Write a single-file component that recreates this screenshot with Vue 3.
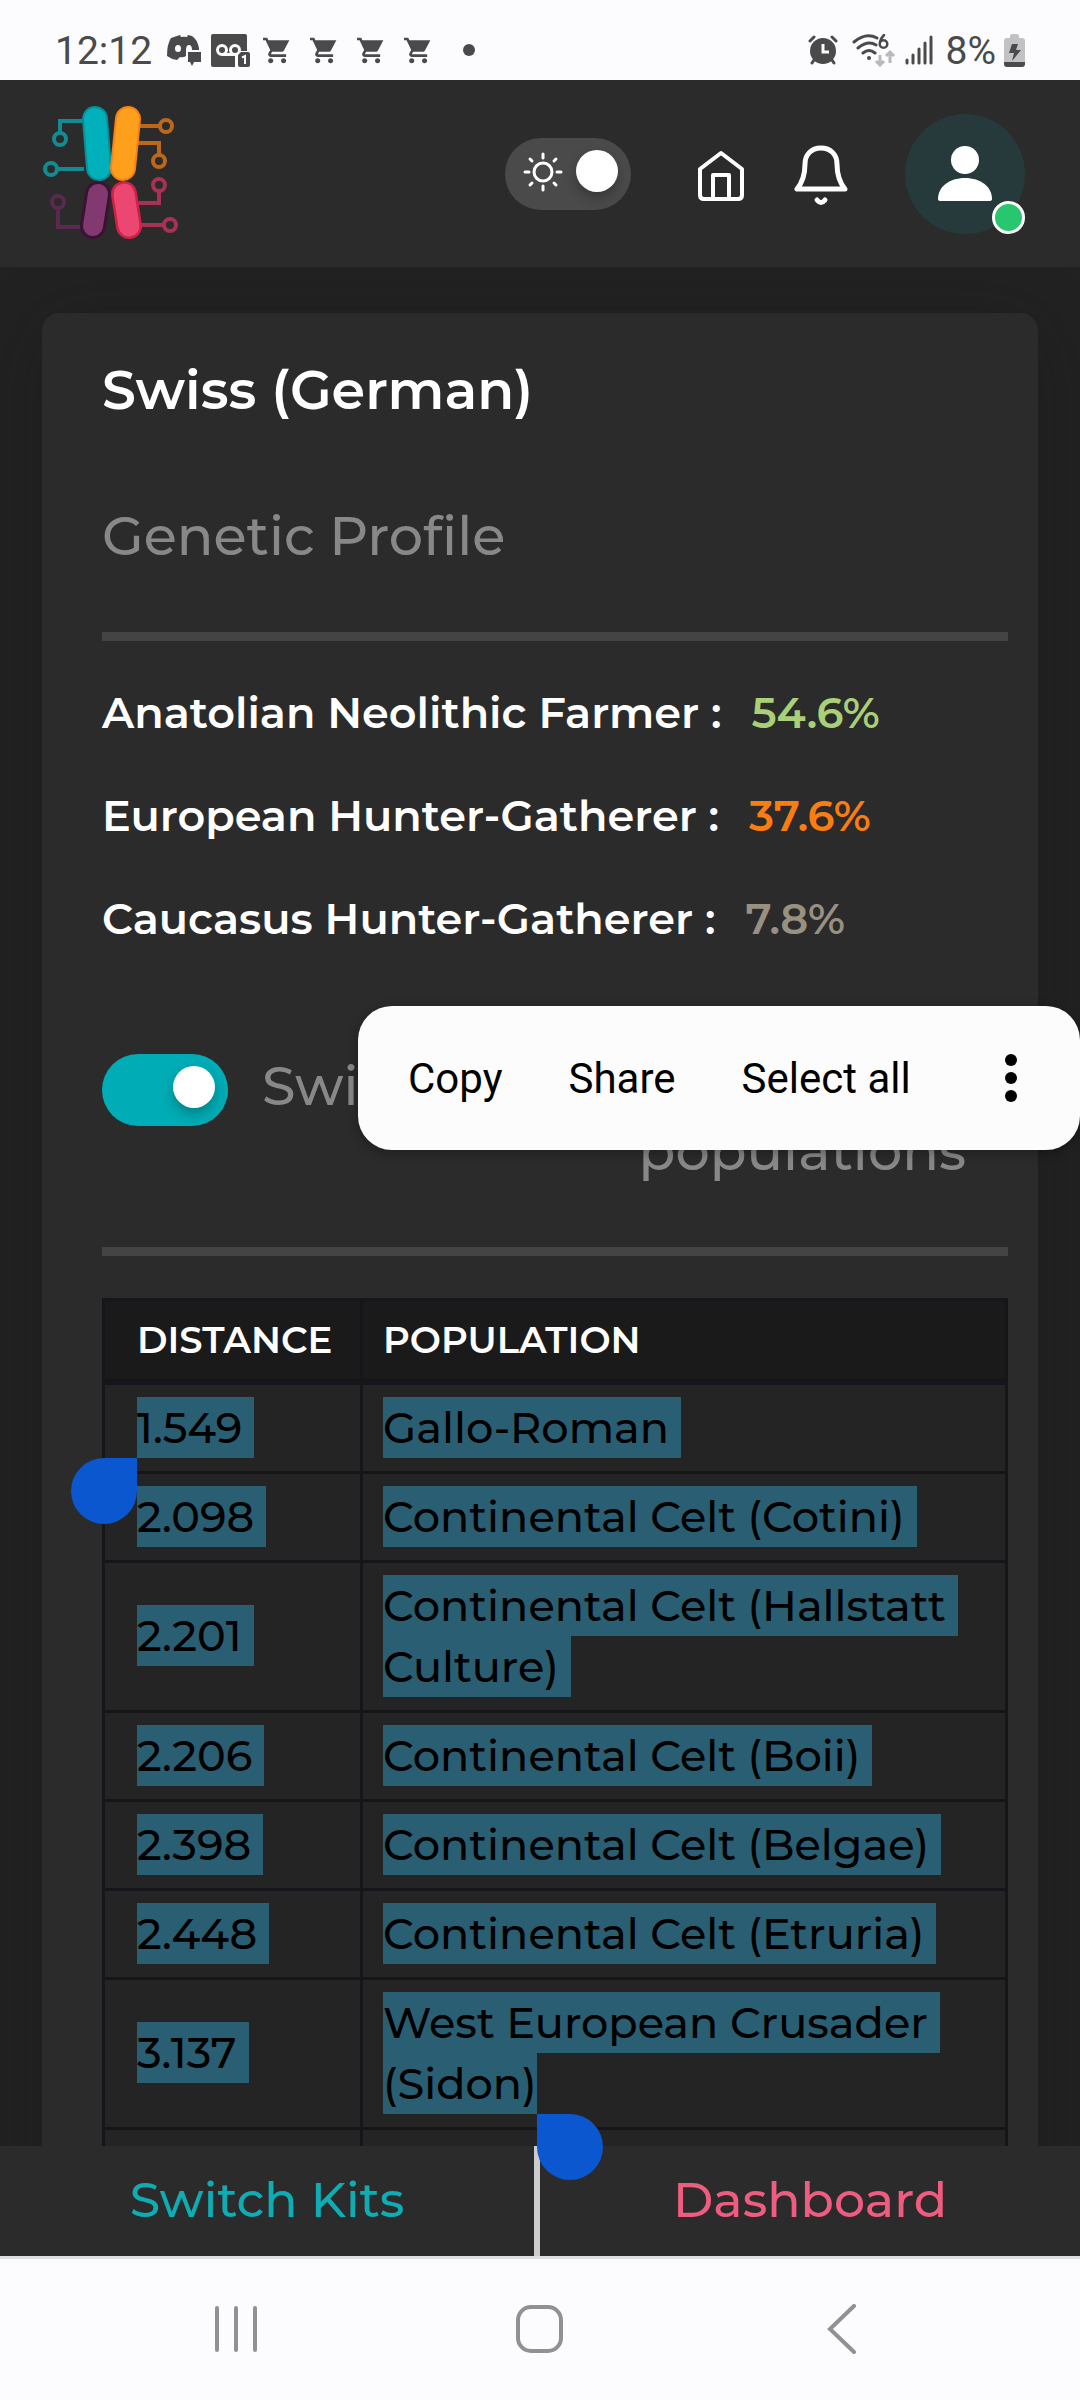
<script setup>
import { ref } from 'vue'

const darkMode = ref(true)
const showPopulations = ref(true)

const profile = [
  { name: 'Anatolian Neolithic Farmer', value: '54.6%', tone: 'green' },
  { name: 'European Hunter-Gatherer', value: '37.6%', tone: 'orange' },
  { name: 'Caucasus Hunter-Gatherer', value: '7.8%', tone: 'stone' }
]

const rows = [
  { distance: '1.549', population: 'Gallo-Roman', start: true },
  { distance: '2.098', population: 'Continental Celt (Cotini)' },
  { distance: '2.201', population: 'Continental Celt (Hallstatt Culture)' },
  { distance: '2.206', population: 'Continental Celt (Boii)' },
  { distance: '2.398', population: 'Continental Celt (Belgae)' },
  { distance: '2.448', population: 'Continental Celt (Etruria)' },
  { distance: '3.137', population: 'West European Crusader', last: '(Sidon)' }
]
</script>

<template>
  <div class="page">
    <div class="status">
      <span class="clock">12:12</span>
      <svg class="discord" width="34" height="32" viewBox="0 0 34 32">
        <path d="M10 2 L13 1 L14 3 Q17 2.400 20 3 L21 1 L25 2 Q30 5 32 14 V16 H19 V22 Q16 24 13 23 L10 26 Q4 25 0 22 Q0 10 4 4 Z" fill="#4a4a4a" />
        <ellipse cx="11" cy="14.500" rx="3" ry="3.500" fill="#fcfcff" />
        <path d="M19 16 Q19 11 22 11 Q25 11 25 16 Z" fill="#fcfcff" />
        <path d="M21 18 H34 V28 H27 L25 32 L23 28 H21 Z" fill="#4a4a4a" />
      </svg>
      <svg class="voicemail" width="39" height="33" viewBox="0 0 39 33">
        <path d="M2 0 H34 Q36 0 36 2 V17 H28 L24 21 V33 H2 Q0 33 0 31 V2 Q0 0 2 0 Z" fill="#4a4a4a" />
        <g fill="none" stroke="#fcfcff" stroke-width="3">
          <circle cx="11" cy="16" r="4.500" /><circle cx="24" cy="16" r="4.500" /><path d="M11 20.500 H26" />
        </g>
        <path d="M30 18 H37 Q39 18 39 20 V31 Q39 33 37 33 H29 Q27 33 27 31 V21 Z" fill="#4a4a4a" />
        <path d="M31 23.500 L34 22 V30" fill="none" stroke="#fcfcff" stroke-width="2" />
      </svg>
      <svg v-for="n in 4" :key="n" class="cart" width="27" height="27" viewBox="1 2 21 20">
        <path fill="#4a4a4a" d="M7 18c-1.100 0-2 .9-2 2s.9 2 2 2 2-.9 2-2-.9-2-2-2zM1 2v2h2l3.600 7.590-1.350 2.450C4.520 15.370 5.480 17 7 17h12v-2H7.420c-.14 0-.25-.11-.25-.25l.93-1.750h7.450c.75 0 1.410-.41 1.750-1.030L21.500 4H5.210l-.94-2H1zm16 16c-1.100 0-2 .9-2 2s.9 2 2 2 2-.9 2-2-.9-2-2-2z" />
      </svg>
      <span class="more-dot"></span>
      <span class="spring"></span>
      <svg class="alarm" width="30" height="30" viewBox="0 0 30 30">
        <g stroke="#4a4a4a" stroke-linecap="round" stroke-width="3">
          <path d="M2 6 L6 2 M28 6 L24 2 M6 25 L4 28 M24 25 L26 28" />
        </g>
        <circle cx="15" cy="16" r="13" fill="#4a4a4a" />
        <path d="M15 9 V17 H21" fill="none" stroke="#fcfcff" stroke-width="3" />
      </svg>
      <svg class="wifi" width="44" height="33" viewBox="0 0 44 33">
        <g fill="none" stroke="#4a4a4a" stroke-width="3" stroke-linecap="round">
          <path d="M2 8 Q14 -2 25 4 M6 14 Q16 6 24 11 M11 19 Q17 14 23 19" />
          <circle cx="31.500" cy="10" r="3.800" stroke-width="2.500" />
          <path d="M28 8 Q29 4 32 1" stroke-width="2.500" />
        </g>
        <circle cx="17" cy="24" r="2" fill="#4a4a4a" />
        <path d="M28 21 V31 M24 27 L28 31 L32 27 M38 29 V18 M34 22 L38 18 L42 22" fill="none" stroke="#b9b9bc" stroke-width="3" />
      </svg>
      <svg class="signal" width="28" height="30" viewBox="0 0 28 30">
        <path d="M2 25 V28 M8 20 V28 M14 14 V28 M20 8 V28 M26 2 V28" stroke="#4a4a4a" stroke-width="3" stroke-linecap="round" />
      </svg>
      <span class="percent">8%</span>
      <svg class="battery" width="21" height="33" viewBox="0 0 21 33">
        <path d="M6 2 Q6 0 8 0 H13 Q15 0 15 2 V4 H18 Q21 4 21 7 V28 H0 V7 Q0 4 3 4 H6 Z" fill="#c2c2c5" />
        <path d="M0 28 H21 V30 Q21 33 18 33 H3 Q0 33 0 30 Z" fill="#4a4a4a" />
        <path d="M8 10 H14 L12 16 H17 L8 27 L10 19 H5 Z" fill="#4a4a4a" />
      </svg>
    </div>

    <header class="topbar">
      <svg class="logo" width="136" height="136" viewBox="0 0 136 136" fill="none">
        <g stroke-width="4">
          <g stroke="#128b92"><path d="M42 15 H18 V26 M16 63 H42" /><circle cx="18" cy="33" r="6" /><circle cx="9" cy="63" r="6" /></g>
          <g stroke="#bd671b"><path d="M96 20 H117 M96 37 H117 V48" /><circle cx="124" cy="20" r="6" /><circle cx="117" cy="55" r="6" /></g>
          <g stroke="#5a2850"><path d="M42 121 H16 V104" /><circle cx="16" cy="96" r="6" /></g>
          <g stroke="#a83156"><path d="M96 97 H117 V86 M96 119 H121" /><circle cx="117" cy="79" r="6" /><circle cx="128" cy="119" r="6" /></g>
        </g>
        <g stroke-linecap="round">
          <path d="M53 13 L57 62" stroke="#078f98" stroke-width="26" /><path d="M53 13 L57 62" stroke="#00b0bb" stroke-width="22" />
          <path d="M86 13 L81 62" stroke="#f48217" stroke-width="26" /><path d="M86 13 L81 62" stroke="#ffa01d" stroke-width="22" />
          <path d="M56 88 L51 120" stroke="#3c1234" stroke-width="26" /><path d="M56 88 L51 120" stroke="#81396f" stroke-width="20" />
          <path d="M82 88 L87 120" stroke="#cf2146" stroke-width="26" /><path d="M82 88 L87 120" stroke="#ec4773" stroke-width="21" />
        </g>
      </svg>
      <span class="spring"></span>
      <label class="theme">
        <input v-model="darkMode" class="switch dim" type="checkbox" aria-label="Dark mode" />
        <svg class="sun" width="42" height="42" viewBox="0 0 42 42" fill="none" stroke="#fff" stroke-width="3" stroke-linecap="round">
          <circle cx="21" cy="21" r="9" />
          <path d="M21 3 V7 M21 35 V39 M3 21 H7 M35 21 H39 M8 8 L10 10 M32 32 L34 34 M8 34 L10 32 M32 10 L34 8" />
        </svg>
      </label>
      <button class="icon home" aria-label="Home">
        <svg width="48" height="58" viewBox="0 0 48 58" fill="none" stroke="#fff" stroke-width="4" stroke-linejoin="round">
          <path d="M24 8 L3 24 V50 Q3 54 7 54 H41 Q45 54 45 50 V24 Z" /><path d="M16 54 V30 H32 V54" />
        </svg>
      </button>
      <button class="icon bell" aria-label="Notifications">
        <svg width="54" height="62" viewBox="0 0 54 62" fill="none" stroke="#fff" stroke-width="5" stroke-linejoin="round" stroke-linecap="round">
          <path d="M27 5 C17 5 11 12 11 21 C11 33 8 40 3 46 H51 C46 40 43 33 43 21 C43 12 37 5 27 5 Z" /><path d="M23 57 Q27 62 31 57" />
        </svg>
      </button>
      <button class="avatar" aria-label="Account">
        <svg width="56" height="62" viewBox="0 0 56 62" fill="#fff">
          <circle cx="28" cy="17" r="14" /><path d="M1 56 C1 44 12 35 28 35 C44 35 55 44 55 56 Q55 58 52 58 H4 Q1 58 1 56 Z" />
        </svg>
        <span class="online"></span>
      </button>
    </header>

    <main>
      <section class="card">
        <h1>Swiss (German)</h1>
        <h2>Genetic Profile</h2>
        <hr />
        <dl>
          <div v-for="item in profile" :key="item.name">
            <dt>{{ item.name }} :</dt>
            <dd :class="item.tone">{{ item.value }}</dd>
          </div>
        </dl>
        <div class="option">
          <input id="populations" v-model="showPopulations" class="switch" type="checkbox" />
          <label for="populations"><span>Swi</span><span class="last">populations</span></label>
        </div>
        <hr />
        <table>
          <thead>
            <tr><th scope="col">DISTANCE</th><th scope="col">POPULATION</th></tr>
          </thead>
          <tbody>
            <tr v-for="row in rows" :key="row.distance">
              <td><mark><span v-if="row.start" class="anchor"><i class="handle start"></i></span>{{ row.distance }}</mark></td>
              <td>
                <mark>{{ row.population }}</mark>
                <template v-if="row.last">
                  <br /><mark class="closing">{{ row.last }}<span class="anchor"><i class="handle end"></i></span></mark>
                </template>
              </td>
            </tr>
            <tr class="next"><td></td><td></td></tr>
          </tbody>
        </table>
      </section>
    </main>

    <nav class="tabs">
      <a class="kits" href="#kits">Switch Kits</a>
      <a class="dashboard" href="#dashboard">Dashboard</a>
    </nav>

    <div class="system">
      <button aria-label="Recent apps">
        <svg width="46" height="50" viewBox="0 0 46 50" stroke="#919194" stroke-width="4" stroke-linecap="round"><path d="M4 4 V46 M23 4 V46 M42 4 V46" /></svg>
      </button>
      <button aria-label="Home screen">
        <svg width="48" height="50" viewBox="0 0 48 50" fill="none" stroke="#919194" stroke-width="4"><rect x="3" y="3" width="43" height="44" rx="13" /></svg>
      </button>
      <button aria-label="Back">
        <svg width="48" height="50" viewBox="0 0 48 50" fill="none" stroke="#919194" stroke-width="4" stroke-linecap="round"><path d="M36 2 L12 25 L36 48" /></svg>
      </button>
    </div>

    <div class="popup">
      <button>Copy</button>
      <button>Share</button>
      <button>Select all</button>
      <button class="more" aria-label="More options">
        <svg width="12" height="48" viewBox="0 0 12 48"><circle cx="6" cy="6" r="6" /><circle cx="6" cy="24" r="6" /><circle cx="6" cy="42" r="6" /></svg>
      </button>
    </div>
  </div>
</template>

<style>
body { background: #222; }
</style>

<style scoped>
* { box-sizing: border-box; }
.page {
  position: relative;
  display: flex;
  flex-direction: column;
  height: 100vh;
  overflow: hidden;
  background: #222;
  color: #fff;
  font-family: Montserrat, Inter, sans-serif;
  font-weight: 500;
}
button { padding: 0; border: 0; background: none; color: inherit; font: inherit; }
svg { display: block; flex: none; }
.spring { flex: 1; }

.status {
  display: flex;
  flex: none;
  align-items: center;
  height: 80px;
  padding: 20px 55px 0;
  background: #fcfcff;
  color: #4a4a4a;
  font: 39px/60px Roboto, sans-serif;
}
.clock, .percent { padding-top: 2px; }
.discord { margin-left: 15px; }
.voicemail { margin: 0 13px 0 10px; }
.cart { margin-right: 20px; }
.more-dot { width: 12px; height: 12px; margin-left: 12px; border-radius: 50%; background: #4a4a4a; }
.wifi { margin-left: 14px; }
.signal { margin: 0 13px 0 9px; }
.battery { margin-left: 8px; }

.topbar {
  position: relative;
  display: flex;
  flex: none;
  align-items: center;
  height: 187px;
  padding: 0 55px 0 42px;
  background: #2b2b2b;
}
.theme { position: relative; display: block; height: 72px; margin-right: 66px; }
.sun { position: absolute; left: 17px; top: 13px; }
.switch {
  display: block;
  flex: none;
  appearance: none;
  width: 126px;
  height: 72px;
  margin: 0;
  padding: 12px 13px;
  border-radius: 36px;
  background: #00acb5;
}
.switch::before {
  content: "";
  display: block;
  width: 42px;
  height: 42px;
  border-radius: 50%;
  background: #fff;
  box-shadow: 0 6px 12px rgba(0, 0, 0, 0.25);
}
.switch:checked::before { margin-left: auto; }
.switch.dim { background: #4a4a4a; }
.home { margin-right: 49px; }
.bell { margin-right: 57px; }
.avatar {
  position: relative;
  display: flex;
  align-items: center;
  justify-content: center;
  width: 120px;
  height: 120px;
  border-radius: 50%;
  background: #263a3b;
}
.online {
  position: absolute;
  right: 0;
  bottom: 0;
  width: 33px;
  height: 33px;
  border: 3px solid #fff;
  border-radius: 50%;
  background: #28c76f;
}

main { flex: 1; min-height: 0; padding: 46px 42px 0; }
.card {
  padding: 45px 30px 44px 60px;
  border-radius: 18px;
  background: #2b2b2b;
  box-shadow: 0 12px 72px rgba(20, 20, 20, 0.3);
}
h1, h2 { margin: 0; font-size: 54px; line-height: 64px; }
h1 { font-weight: 600; }
h2 { margin: 82px 0 64px; color: #888; font-weight: 500; }
hr { height: 9px; margin: 0; border: 0; background: #444; }
dl { display: flex; flex-direction: column; gap: 39px; margin: 40px 0 103px; font-size: 43px; font-weight: 600; line-height: 64px; }
dl div { display: flex; gap: 30px; }
dd { margin: 0; }
.green { color: #a9cf77; }
.orange { color: #fa7d12; }
.stone { color: #989080; }
.option { display: flex; gap: 34px; margin-bottom: 63px; padding-right: 42px; color: #888; font-size: 54px; line-height: 65px; }
.option label { flex: 1; }
.option label span { display: block; }
.option .last { text-align: right; }

table { width: 100%; margin-top: 42px; border-collapse: collapse; table-layout: fixed; color: #000; font-size: 43px; line-height: 61px; }
th, td { border: 3px solid #16161a; text-align: left; }
th { height: 82px; padding: 0 20px; border-bottom-width: 6px; background: #1a1a1a; color: #fff; font-size: 37px; font-weight: 600; line-height: 61px; }
td { padding: 12px 20px 13px; background: #242424; }
th:first-child, td:first-child { width: 258px; padding-left: 32px; padding-right: 0; }
mark {
  padding: 4px 12px 4px 0;
  background: #2a5e72;
  color: #000;
  box-decoration-break: clone;
  -webkit-box-decoration-break: clone;
}
mark.closing { padding-right: 0; }
.next td { height: 89px; }
.anchor { position: relative; }
.handle { position: absolute; z-index: 2; top: calc(100% + 4px); width: 66px; height: 66px; border-radius: 50%; background: #0b57d0; }
.handle.start { right: 0; border-top-right-radius: 0; }
.handle.end { left: 0; border-top-left-radius: 0; }

.tabs {
  position: relative;
  z-index: 1;
  display: flex;
  flex: none;
  height: 113px;
  border-bottom: 3px solid #dce0e3;
  background: #2b2b2b;
  font-size: 49px;
  line-height: 108px;
  text-align: center;
}
.tabs a { width: 50%; text-decoration: none; }
.kits { border-right: 6px solid #ccc; color: #0facb3; }
.dashboard { color: #ee5c80; }
.system {
  position: relative;
  z-index: 1;
  display: flex;
  flex: none;
  align-items: center;
  justify-content: space-between;
  height: 141px;
  padding: 0 214px 2px 213px;
  background: #fcfcff;
}
.popup {
  position: absolute;
  z-index: 3;
  top: 1006px;
  right: 0;
  display: flex;
  align-items: center;
  gap: 66px;
  width: 722px;
  height: 144px;
  padding: 0 63px 0 50px;
  border-radius: 34px;
  background: #fcfcfc;
  box-shadow: 0 3px 12px rgba(0, 0, 0, 0.3);
  color: #000;
  font: 42px/60px Roboto, sans-serif;
}
.popup button { padding-top: 2px; }
.popup .more { margin-left: auto; padding: 0; }
</style>
